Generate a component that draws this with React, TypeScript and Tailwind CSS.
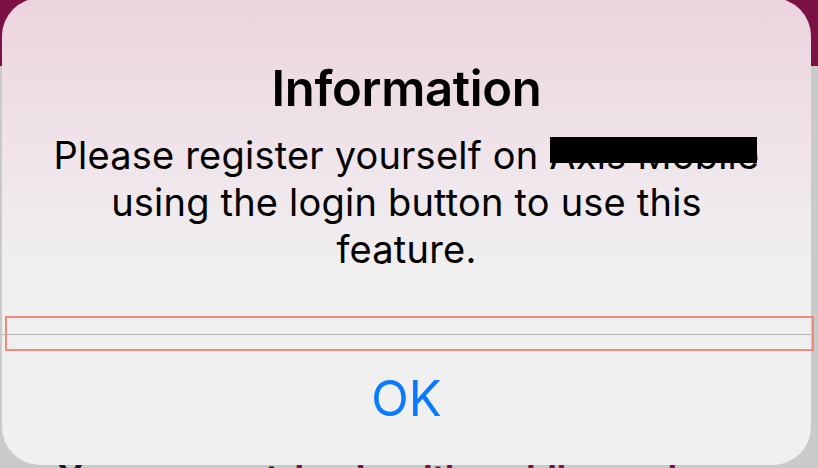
export default function App() {
  return (
    <div className="relative w-[818px] h-[468px] overflow-hidden bg-[#cacaca] font-['Inter','Noto_Sans',sans-serif]">
      {/* page behind the alert */}
      <div className="h-[66px] bg-[#7c1244]" />
      <div className="absolute left-[58px] top-[461px] flex gap-4 text-[34px] font-bold leading-none whitespace-nowrap">
        <span className="text-[#1a1a1a]">Your account</span>
        <span className="text-[#7c1244]">Login with mobile number</span>
      </div>

      {/* alert */}
      <div className="absolute left-[2px] top-[-2px] w-[809px] h-[467px] rounded-[38px] bg-[linear-gradient(180deg,#ebd3de_0%,#efe3e9_30%,#f0eff0_58%,#f0f0f0_100%)] flex flex-col">
        <div className="flex flex-col items-center pt-[63px]">
          <h1 className="text-[49px] font-semibold leading-[56px] text-black tracking-[-0.3px]">
            Information
          </h1>
          <p className="mt-[15px] text-center text-[38px] leading-[47px] text-black tracking-[0.2px]">
            Please register yourself on{' '}
            <span className="relative inline-block">
              Axis Mobile
              <span className="absolute left-[1px] right-[2px] top-[5px] h-[26px] bg-black" />
            </span>
            <br />
            using the login button to use this
            <br />
            feature.
          </p>
        </div>

        <div className="mt-[61px] h-px bg-[#b4b4b4]" />

        <div className="flex flex-1 items-center justify-center pb-[4px]">
          <span className="text-[49px] leading-none text-[#0a7aff]">OK</span>
        </div>
      </div>

      {/* annotation box */}
      <div className="absolute left-[5px] top-[316px] w-[809px] h-[35px] border-2 border-[#ee8b7c]" />
    </div>
  );
}
